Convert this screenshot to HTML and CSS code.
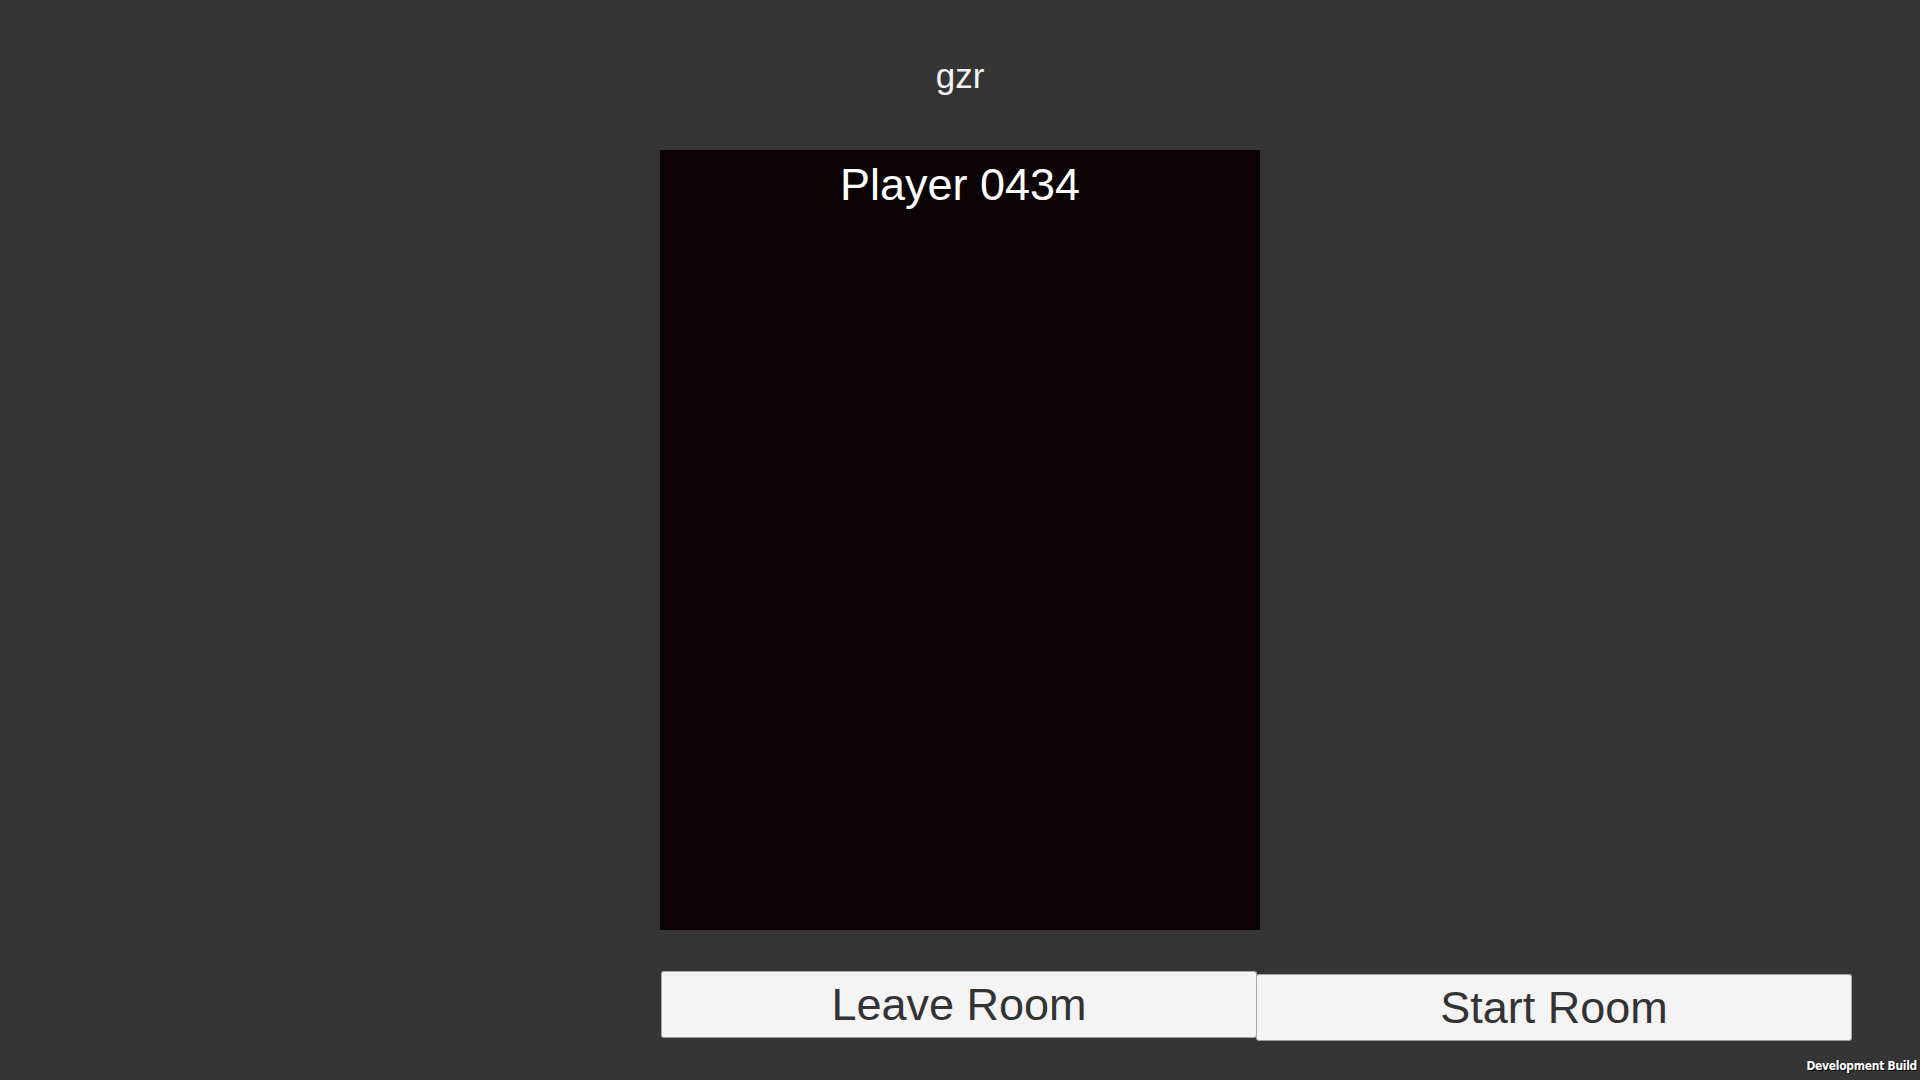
FILE: index.html
```html
<!DOCTYPE html>
<html>
<head>
<meta charset="utf-8">
<link rel="stylesheet" href="styles.css">
</head>
<body>
<div class="screen">
  <div class="room-name">gzr</div>
  <div class="player-panel">
    <div class="player-name">Player 0434</div>
  </div>
  <div class="actions">
    <button class="btn btn-leave">Leave Room</button>
    <button class="btn btn-start">Start Room</button>
  </div>
  <div class="dev-build">Development Build</div>
</div>
</body>
</html>
```
FILE: styles.css
```css
html, body {
  margin: 0;
  padding: 0;
  background: #353535;
  width: 1920px;
  height: 1080px;
  overflow: hidden;
}
.screen {
  position: relative;
  width: 1920px;
  height: 1080px;
  font-family: "Liberation Sans", Arial, sans-serif;
}
.room-name {
  padding-top: 56px;
  height: 40px;
  line-height: 40px;
  font-size: 35px;
  color: #f2f2f2;
  text-align: center;
}
.player-panel {
  margin: 54px auto 0;
  width: 600px;
  height: 780px;
  background: #0b0203;
  box-sizing: border-box;
  padding-top: 10px;
}
.player-name {
  font-size: 45px;
  line-height: 50px;
  color: #ffffff;
  text-align: center;
}
.actions {
  display: flex;
  align-items: flex-start;
  margin-top: 41px;
  padding-left: 661px;
}
.btn {
  width: 596px;
  height: 67px;
  box-sizing: border-box;
  background: #f4f4f4;
  border: 1px solid #a9a9a9;
  border-bottom-color: #9a9a9a;
  border-radius: 3px;
  font-family: "Liberation Sans", Arial, sans-serif;
  font-size: 45px;
  color: #333333;
  padding: 0;
  line-height: 63px;
  text-align: center;
}
.btn-start {
  margin-left: -1px;
  margin-top: 3px;
}
.dev-build {
  position: absolute;
  right: 3px;
  bottom: 7px;
  font-family: "Liberation Sans Narrow", "DejaVu Sans Condensed", sans-serif;
  font-weight: bold;
  font-size: 12px;
  letter-spacing: -0.3px;
  color: #ffffff;
  text-shadow: 1px 1px 0 #000;
}
```
